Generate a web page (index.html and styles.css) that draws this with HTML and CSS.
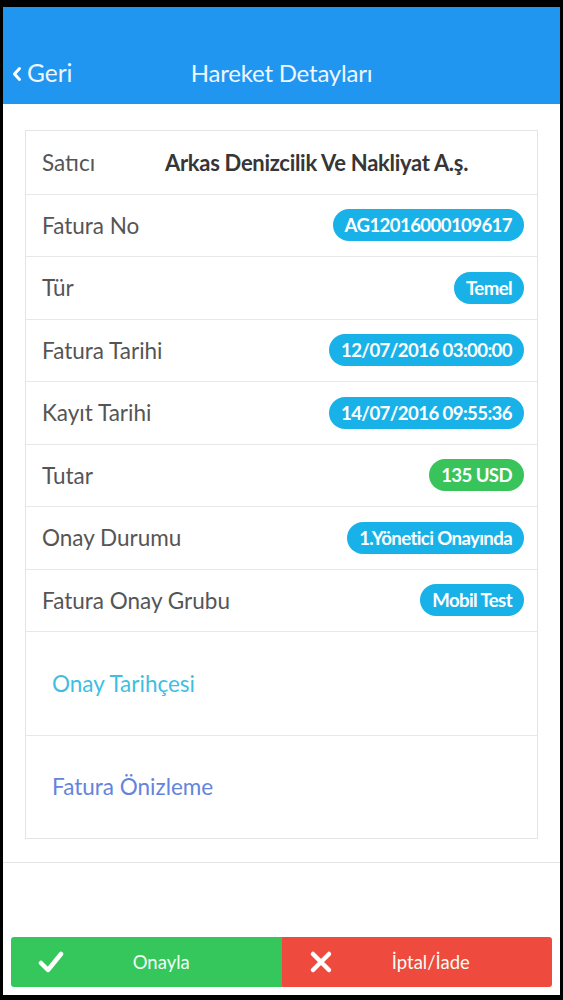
FILE: index.html
```html
<!DOCTYPE html>
<html lang="tr">
<head>
<meta charset="utf-8">
<title>Hareket Detayları</title>
<link rel="stylesheet" href="styles.css">
</head>
<body>
<div class="screen">
  <header class="topbar">
    <a class="back" href="#">
      <svg class="chev" width="10" height="16" viewBox="0 0 10 16"><polyline points="7.5,2.5 2.5,8 7.5,13.5" fill="none" stroke="#fff" stroke-width="3" stroke-linecap="round" stroke-linejoin="round"/></svg>
      <span>Geri</span>
    </a>
    <h1 class="title">Hareket Detayları</h1>
    <span class="spacer"></span>
  </header>

  <main class="content">
    <section class="card">
      <div class="row">
        <span class="label">Satıcı</span>
        <span class="vendor">Arkas Denizcilik Ve Nakliyat A.ş.</span>
      </div>
      <div class="row">
        <span class="label">Fatura No</span>
        <span class="badge">AG12016000109617</span>
      </div>
      <div class="row">
        <span class="label">Tür</span>
        <span class="badge">Temel</span>
      </div>
      <div class="row">
        <span class="label">Fatura Tarihi</span>
        <span class="badge">12/07/2016 03:00:00</span>
      </div>
      <div class="row">
        <span class="label">Kayıt Tarihi</span>
        <span class="badge">14/07/2016 09:55:36</span>
      </div>
      <div class="row">
        <span class="label">Tutar</span>
        <span class="badge badge-green">135 USD</span>
      </div>
      <div class="row">
        <span class="label">Onay Durumu</span>
        <span class="badge">1.Yönetici Onayında</span>
      </div>
      <div class="row">
        <span class="label">Fatura Onay Grubu</span>
        <span class="badge">Mobil Test</span>
      </div>
      <div class="link-row">
        <a class="link link-history" href="#">Onay Tarihçesi</a>
      </div>
      <div class="link-row">
        <a class="link link-preview" href="#">Fatura Önizleme</a>
      </div>
    </section>
  </main>

  <div class="divider"></div>

  <footer class="actions">
    <button class="btn btn-approve" type="button">
      <svg class="btn-icon" width="26" height="24" viewBox="0 0 26 24"><polyline points="3,13 10,20 23,4" fill="none" stroke="#fff" stroke-width="4.5" stroke-linecap="round" stroke-linejoin="round"/></svg>
      <span class="btn-text">Onayla</span>
    </button>
    <button class="btn btn-reject" type="button">
      <svg class="btn-icon" width="24" height="24" viewBox="0 0 24 24"><path d="M4 4 L20 20 M20 4 L4 20" fill="none" stroke="#fff" stroke-width="4.5" stroke-linecap="round"/></svg>
      <span class="btn-text">İptal/İade</span>
    </button>
  </footer>
</div>
</body>
</html>
```

FILE: styles.css
```css
* { box-sizing: border-box; }

html, body {
  margin: 0;
  padding: 0;
  background: #000;
}

body {
  font-family: "Lato", "Open Sans", sans-serif;
  padding: 7px 3px 5px 3px;
  height: 1000px;
}

.screen {
  background: #fff;
  height: 988px;
  display: flex;
  flex-direction: column;
}

.topbar {
  height: 97px;
  background: #2196f0;
  display: grid;
  grid-template-columns: 1fr auto 1fr;
  align-items: end;
  padding: 0 9px 16px 9px;
  color: #fff;
}

.back {
  display: flex;
  align-items: center;
  gap: 5px;
  color: #eef6ff;
  text-decoration: none;
  font-size: 24.5px;
  line-height: 30px;
}

.chev { margin-top: 1px; }

.title {
  margin: 0;
  font-size: 24px;
  font-weight: 400;
  line-height: 30px;
  color: #eef6ff;
  letter-spacing: -0.2px;
}

.content {
  flex: 1;
  padding: 26px 22px 0 22px;
}

.card {
  border: 1px solid #e4e4e4;
}

.row {
  height: 62.5px;
  display: flex;
  align-items: center;
  justify-content: space-between;
  padding: 0 13px 0 16px;
  border-top: 1px solid #e8e8e8;
}

.row:first-child { border-top: none; }

.label {
  font-size: 22.5px;
  color: #555;
}

.vendor {
  flex: 1;
  text-align: center;
  padding-left: 14px;
  font-size: 22px;
  font-weight: 700;
  color: #363636;
  letter-spacing: -0.3px;
}

.badge {
  background: #19b2e8;
  color: #fff;
  font-weight: 700;
  font-size: 18.6px;
  line-height: 32px;
  height: 32px;
  padding: 0 12px;
  border-radius: 16px;
  letter-spacing: -0.6px;
}

.badge-green { background: #38c45a; }

.link-row {
  height: 103.5px;
  display: flex;
  align-items: center;
  padding: 0 26px;
  border-top: 1px solid #e8e8e8;
}

.link {
  font-size: 22.5px;
  text-decoration: none;
}

.link-history { color: #3dbfe3; }
.link-preview { color: #6484dc; }

.divider {
  height: 1px;
  background: #e3e3e3;
  margin-bottom: 74px;
}

.actions {
  display: flex;
  padding: 0 8px 8px 8px;
}

.btn {
  flex: 1;
  height: 50px;
  border: none;
  display: flex;
  align-items: center;
  padding: 0 0 0 27px;
  color: #f2fff4;
  font-family: "Lato", "Open Sans", sans-serif;
  font-size: 18.5px;
  cursor: pointer;
}

.btn-approve {
  background: #35c65c;
  border-radius: 3px 0 0 3px;
}

.btn-reject {
  background: #ef4a3e;
  border-radius: 0 3px 3px 0;
  padding-left: 27px;
}

.btn-text {
  flex: 1;
  text-align: center;
  padding-right: 23px;
}
```
